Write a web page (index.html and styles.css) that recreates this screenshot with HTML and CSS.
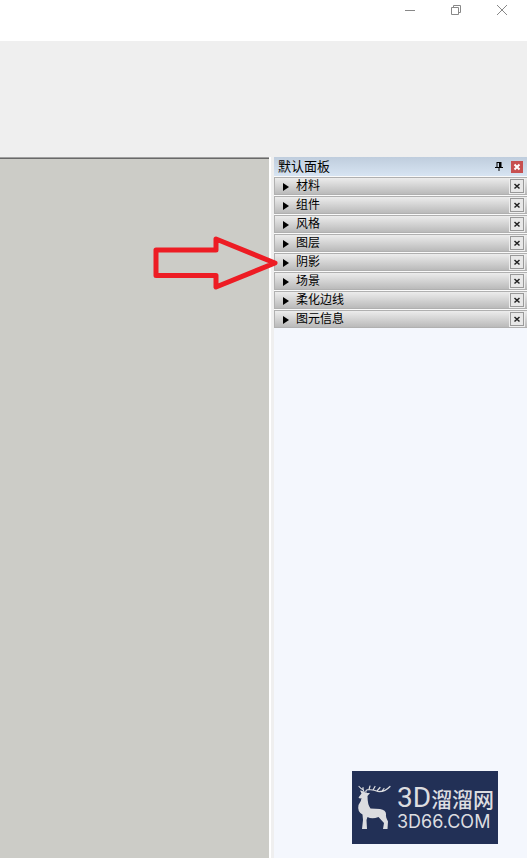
FILE: index.html
```html
<!DOCTYPE html>
<html lang="zh-CN">
<head>
<meta charset="utf-8">
<title>默认面板</title>
<link rel="stylesheet" href="styles.css">
</head>
<body>
<header class="titlebar">
  <button class="win" aria-label="最小化"><svg viewBox="0 0 12 12"><path d="M1 6.500h10"/></svg></button>
  <button class="win" aria-label="还原"><svg viewBox="0 0 12 12"><path d="M1.500 3.500h7v7h-7zM3.500 3v-1.500h7v7h-1.500"/></svg></button>
  <button class="win" aria-label="关闭"><svg viewBox="0 0 12 12"><path d="M1 1l10 10M11 1L1 11"/></svg></button>
</header>
<div class="toolbar"></div>
<main class="workspace">
  <section class="canvas"></section>
  <aside class="tray">
    <div class="tray-head">
      <h1>默认面板</h1>
      <button class="pin" aria-label="固定"><svg viewBox="0 0 8 9"><path d="M1.500 0h5v5h1.500v1h-3.500v3h-1v-3h-3.500v-1h1.500zM2.500 1v4h1.500v-4z" fill="#000" fill-rule="evenodd"/></svg></button>
      <button class="shut" aria-label="关闭"><svg viewBox="0 0 8 8"><path d="M1.500 1.500l5 5M6.500 1.500l-5 5" stroke="#fff" stroke-width="2"/></svg></button>
    </div>
    <div class="sections">
      <div class="row"><button class="toggle">材料</button><button class="close" aria-label="关闭材料"><svg viewBox="0 0 8 8"><path d="M1.500 2l5 4.500M6.500 2l-5 4.500"/></svg></button></div>
      <div class="row"><button class="toggle">组件</button><button class="close" aria-label="关闭组件"><svg viewBox="0 0 8 8"><path d="M1.500 2l5 4.500M6.500 2l-5 4.500"/></svg></button></div>
      <div class="row"><button class="toggle">风格</button><button class="close" aria-label="关闭风格"><svg viewBox="0 0 8 8"><path d="M1.500 2l5 4.500M6.500 2l-5 4.500"/></svg></button></div>
      <div class="row"><button class="toggle">图层</button><button class="close" aria-label="关闭图层"><svg viewBox="0 0 8 8"><path d="M1.500 2l5 4.500M6.500 2l-5 4.500"/></svg></button></div>
      <div class="row"><button class="toggle">阴影</button><button class="close" aria-label="关闭阴影"><svg viewBox="0 0 8 8"><path d="M1.500 2l5 4.500M6.500 2l-5 4.500"/></svg></button>
        <svg class="pointer" viewBox="0 0 126 54"><path d="M3 14h60V3L122 27L63 51V39.500H3z"/></svg>
      </div>
      <div class="row"><button class="toggle">场景</button><button class="close" aria-label="关闭场景"><svg viewBox="0 0 8 8"><path d="M1.500 2l5 4.500M6.500 2l-5 4.500"/></svg></button></div>
      <div class="row"><button class="toggle">柔化边线</button><button class="close" aria-label="关闭柔化边线"><svg viewBox="0 0 8 8"><path d="M1.500 2l5 4.500M6.500 2l-5 4.500"/></svg></button></div>
      <div class="row"><button class="toggle">图元信息</button><button class="close" aria-label="关闭图元信息"><svg viewBox="0 0 8 8"><path d="M1.500 2l5 4.500M6.500 2l-5 4.500"/></svg></button></div>
    </div>
    <div class="brand">
      <svg class="deer" viewBox="0 0 34 46">
        <path fill="#dcdde0" d="M1.500 12.500L4.500 8.500L3 5.500Q6.500 5.500 7.500 8L13 8L10.500 11Q10.500 20 13.500 23.500L23 24Q29 25 29 29Q28.500 32 31 36.500L30.500 44H26L27 38L21.500 32Q15 34.500 10.500 32L9.500 35L10 44H5L6 35L5.500 29.500Q0 26.500 1.500 20Q4.500 16 4.500 13Q3 14 1.500 12.500z"/>
        <path fill="none" stroke="#dcdde0" stroke-width="1.200" stroke-linecap="round" d="M9 8Q8 4.500 12 4.500Q18 5 21 6.500Q28 7 33 1.500M7.500 7.500Q5.500 5 6 2.500M12 4.500L13 1M16 5L18 1.500M20 6L23 2.500M25 6L27 3.500M2 1.500Q4 4 6.500 5"/>
      </svg>
      <div class="words">
        <div class="name"><span class="latin">3D</span><span class="han">溜溜网</span></div>
        <div class="domain">3D66.COM</div>
      </div>
    </div>
  </aside>
</main>
</body>
</html>
```
FILE: styles.css
```css
* { box-sizing: border-box; }
html, body { height: 100%; }
body {
  margin: 0;
  display: flex;
  flex-direction: column;
  background: #efefef;
  font-family: "Liberation Sans", "Noto Sans CJK SC", sans-serif;
  color: #000;
}
button {
  margin: 0;
  padding: 0;
  border: 0;
  background: none;
  font: inherit;
  color: inherit;
}
svg { display: block; }

.titlebar {
  height: 41px;
  flex: none;
  display: flex;
  justify-content: flex-end;
  background: #fff;
  padding-right: 2px;
}
.win {
  width: 46px;
  height: 20px;
  display: flex;
  align-items: center;
  justify-content: center;
}
.win svg {
  width: 12px;
  height: 12px;
  fill: none;
  stroke: #888;
}
.toolbar { height: 116px; flex: none; }

.workspace { flex: 1; display: flex; gap: 3px; }
.canvas {
  flex: 1;
  background: #ccccc7;
  border-right: 2px solid #fff;
  box-shadow: inset 0 1px #a0a0a0, inset 0 2px #696969;
}
.tray {
  width: 253px;
  display: flex;
  flex-direction: column;
  background: #f4f7fd;
}
.tray-head {
  height: 19px;
  display: flex;
  align-items: center;
  padding: 0 4px;
  background: linear-gradient(#bfcddd, #d7e4f2);
}
h1 {
  flex: 1;
  margin: 0;
  font-size: 13px;
  line-height: 18px;
  font-weight: 400;
}
.pin { margin-right: 8px; }
.pin svg { width: 8px; height: 9px; }
.shut {
  width: 12px;
  height: 12px;
  display: grid;
  place-items: center;
  background: #c75050;
}
.shut svg { width: 8px; height: 8px; }

.sections {
  display: flex;
  flex-direction: column;
  gap: 1px;
  padding-top: 1px;
  background: #fafafa;
}
.row {
  position: relative;
  height: 18px;
  display: flex;
  align-items: center;
  padding-right: 3px;
  border: 1px solid #b0b0b0;
  border-right: 0;
  background: linear-gradient(#ececec, #bababa);
}
.toggle {
  flex: 1;
  display: flex;
  align-items: center;
  gap: 7px;
  padding: 1px 0 0 8px;
  font-size: 12px;
  line-height: 17px;
}
.toggle::before {
  content: "";
  border-left: 6px solid #000;
  border-top: 4px solid transparent;
  border-bottom: 4px solid transparent;
}
.close {
  width: 14px;
  height: 14px;
  display: grid;
  place-items: center;
  border: 1px solid #999;
  background: #e8e8e8;
  outline: 1px solid #eee;
}
.close svg {
  width: 8px;
  height: 8px;
  stroke: #222;
  stroke-width: 1.5;
}
.pointer {
  position: absolute;
  right: 248px;
  top: -18px;
  width: 126px;
  height: 54px;
  fill: none;
  stroke: #ed1c24;
  stroke-width: 5;
  stroke-linejoin: round;
  pointer-events: none;
  z-index: 1;
}

.brand {
  width: 146px;
  height: 73px;
  margin: auto 29px 14px auto;
  display: flex;
  align-items: center;
  gap: 6px;
  padding-left: 5px;
  background: #223056;
  color: #dcdde0;
}
.deer { width: 34px; height: 46px; }
.words {
  display: flex;
  flex-direction: column;
}
.name {
  display: flex;
  align-items: center;
  height: 28px;
  white-space: nowrap;
}
.latin { font: 400 28px/28px Roboto, sans-serif; }
.han { font: 500 21px/24px "Noto Sans CJK SC", sans-serif; }
.domain { font: 400 18px/20px Inter, sans-serif; }
```
